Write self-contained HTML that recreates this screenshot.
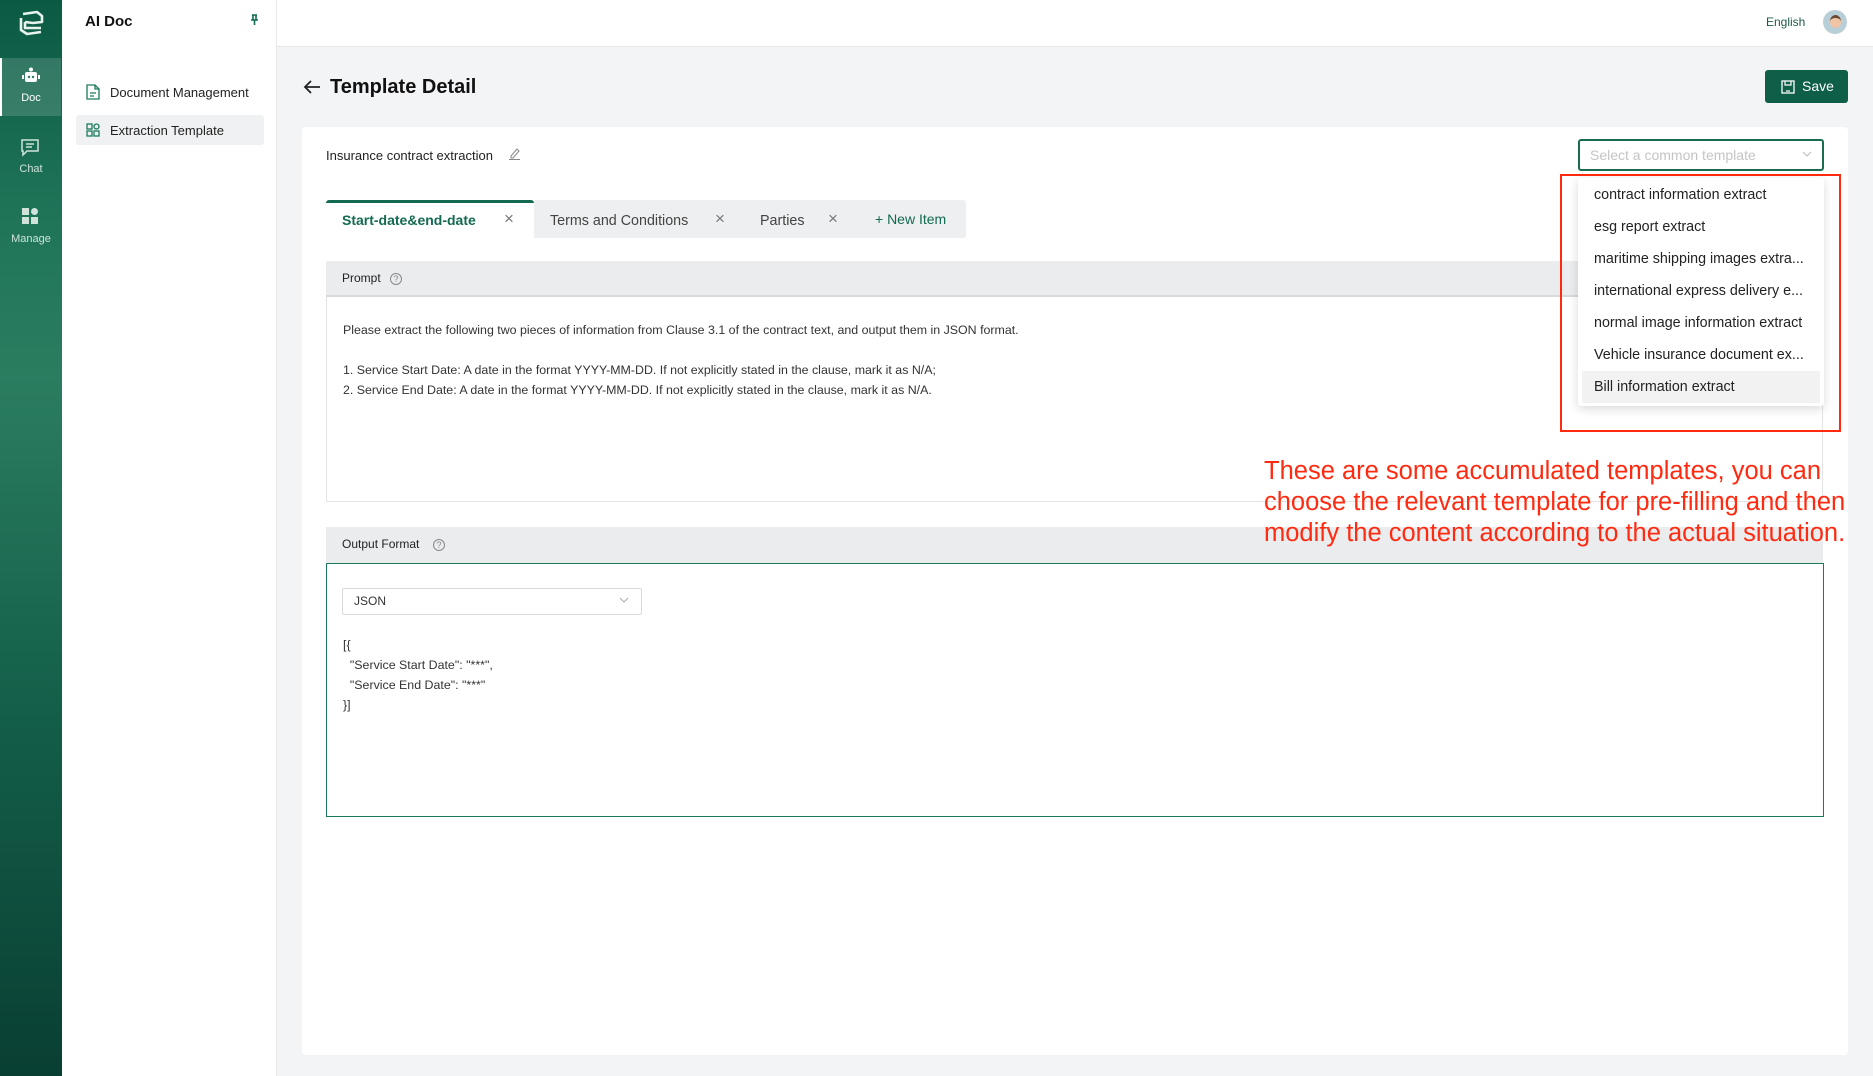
<!DOCTYPE html>
<html><head><meta charset="utf-8"><style>
*{box-sizing:border-box;margin:0;padding:0}
body{width:1873px;height:1076px;overflow:hidden;background:#f3f4f6;font-family:"Liberation Sans",Arial,sans-serif;color:#222;position:relative}
.abs{position:absolute}
.rail{left:0;top:0;width:62px;height:1076px;background:linear-gradient(180deg,#0b5a44 0%,#1f7458 20%,#2b7d60 35%,#14604a 65%,#093f33 100%)}
.rail .it{position:absolute;left:0;width:62px;text-align:center;color:#cfe3db;font-size:11px}
.side{left:62px;top:0;width:215px;height:1076px;background:#fff;border-right:1px solid #e8e8e8}
.top{left:277px;top:0;width:1596px;height:47px;background:#fff;border-bottom:1px solid #e6e6e6}
.card{left:302px;top:127px;width:1546px;height:928px;background:#fff;border-radius:4px}
.t{position:absolute;white-space:nowrap}
</style></head><body>
<div class="abs rail">
 <svg class="abs" style="left:17px;top:10px" width="28" height="26" viewBox="0 0 28 26"><path d="M6 4 L20 2 L25 6 L25 12 L16 13 L8 12 M8 12 L8 18 L24 18 M4 8 L4 20 L10 24 L24 22" fill="none" stroke="#e8f2ee" stroke-width="2.6" stroke-linejoin="round"/></svg>
 <div class="abs" style="left:0;top:58px;width:61px;height:58px;background:rgba(255,255,255,.15);border-left:2px solid #fff"></div>
 <svg class="abs" style="left:21px;top:67px" width="20" height="18" viewBox="0 0 20 18"><circle cx="10" cy="2.5" r="2" fill="#fff"/><rect x="4" y="5" width="12" height="10" rx="2" fill="#fff"/><rect x="1" y="8" width="2" height="4" fill="#fff"/><rect x="17" y="8" width="2" height="4" fill="#fff"/><circle cx="8" cy="10" r="1.2" fill="#2b7d60"/><circle cx="12" cy="10" r="1.2" fill="#2b7d60"/></svg>
 <div class="it" style="top:92px;color:#fff">Doc</div>
 <svg class="abs" style="left:20px;top:138px" width="20" height="19" viewBox="0 0 20 19"><path d="M2 2 H18 V13 H7 L3 17 V13 H2 Z" fill="none" stroke="#cfe3db" stroke-width="1.5"/><path d="M6 6 H14 M6 9 H12" stroke="#cfe3db" stroke-width="1.4"/></svg>
 <div class="it" style="top:163px">Chat</div>
 <svg class="abs" style="left:21px;top:207px" width="18" height="18" viewBox="0 0 18 18"><rect x="1" y="1" width="7" height="7" fill="#cfe3db"/><circle cx="13.5" cy="4.5" r="3.5" fill="#cfe3db"/><rect x="1" y="10" width="7" height="7" fill="#cfe3db"/><rect x="10" y="10" width="7" height="7" fill="#cfe3db"/></svg>
 <div class="it" style="top:233px">Manage</div>
</div>
<div class="abs side">
 <div class="t" style="left:23px;top:13px;font-size:15px;font-weight:bold;color:#111">AI Doc</div>
 <svg class="abs" style="left:188px;top:14px" width="9" height="12" viewBox="0 0 9 12"><path d="M2 1 H7 M3 1 V6 M6 1 V6 M1 6 H8 M4.5 6 V11" stroke="#0f6b50" stroke-width="1.6" fill="none"/></svg>
 <svg class="abs" style="left:24px;top:84px" width="14" height="16" viewBox="0 0 14 16"><path d="M1 1 H9 L13 5 V15 H1 Z M9 1 V5 H13 M4 9 H10 M4 12 H8" fill="none" stroke="#1a7a5c" stroke-width="1.3"/></svg>
 <div class="t" style="left:48px;top:85px;font-size:13px;color:#222">Document Management</div>
 <div class="abs" style="left:14px;top:115px;width:188px;height:30px;background:#f0f1f2;border-radius:3px"></div>
 <svg class="abs" style="left:24px;top:123px" width="14" height="14" viewBox="0 0 14 14"><rect x="1" y="1" width="5" height="5" fill="none" stroke="#1a7a5c" stroke-width="1.3"/><circle cx="10.5" cy="3.5" r="2.5" fill="none" stroke="#1a7a5c" stroke-width="1.3"/><rect x="1" y="8" width="5" height="5" fill="none" stroke="#1a7a5c" stroke-width="1.3"/><rect x="8" y="8" width="5" height="5" fill="none" stroke="#1a7a5c" stroke-width="1.3"/></svg>
 <div class="t" style="left:48px;top:123px;font-size:13px;color:#222">Extraction Template</div>
</div>
<div class="abs top">
 <div class="t" style="left:1489px;top:15px;font-size:12px;color:#1d5a47">English</div>
 <div class="abs" style="left:1546px;top:10px;width:24px;height:24px;border-radius:50%;background:#b9cfd8;overflow:hidden"><div style="margin:5px auto 0;width:11px;height:13px;border-radius:50%;background:#f0c4a4;border-top:3px solid #6b4a35"></div></div>
</div>
<svg class="abs" style="left:302px;top:79px" width="20" height="16" viewBox="0 0 20 16"><path d="M18 8 H3 M9 2 L3 8 L9 14" fill="none" stroke="#222" stroke-width="1.8"/></svg>
<div class="t" style="left:330px;top:76px;font-size:20px;font-weight:bold;color:#111">Template Detail</div>
<div class="abs" style="left:1765px;top:70px;width:83px;height:33px;background:#0f5e48;border-radius:3px"></div>
<svg class="abs" style="left:1781px;top:80px" width="14" height="14" viewBox="0 0 14 14"><rect x="1" y="1" width="12" height="12" fill="none" stroke="#fff" stroke-width="1.3"/><path d="M4 1 V5 H10 V1 M5 11 H9" stroke="#fff" stroke-width="1.2" fill="none"/></svg>
<div class="t" style="left:1802px;top:78px;font-size:14px;color:#fff">Save</div>

<div class="abs card"></div>
<div class="t" style="left:326px;top:148px;font-size:13px;color:#222">Insurance contract extraction</div>
<svg class="abs" style="left:508px;top:147px" width="13" height="13" viewBox="0 0 13 13"><path d="M3 9 L9 2 L11 4 L5 11 L3 11 Z M1 12.5 H12" fill="none" stroke="#888" stroke-width="1"/></svg>

<div class="abs" style="left:534px;top:200px;width:432px;height:38px;background:#eeeff1;border-radius:0 3px 3px 0"></div>
<div class="abs" style="left:326px;top:200px;width:208px;height:38px;background:#fff;border-top:3px solid #136a51;border-radius:3px 3px 0 0"></div>
<div class="t" style="left:342px;top:212px;font-size:14px;color:#136a51;font-weight:bold">Start-date&amp;end-date</div>
<div class="t" style="left:504px;top:209px;font-size:17px;color:#777">×</div>
<div class="t" style="left:550px;top:213px;font-size:14.3px;color:#444">Terms and Conditions</div>
<div class="t" style="left:715px;top:209px;font-size:17px;color:#777">×</div>
<div class="t" style="left:760px;top:213px;font-size:14.3px;color:#444">Parties</div>
<div class="t" style="left:828px;top:209px;font-size:17px;color:#777">×</div>
<div class="t" style="left:875px;top:211px;font-size:14px;color:#136a51">+ New Item</div>

<div class="abs" style="left:326px;top:261px;width:1497px;height:36px;background:#ebecee;border-bottom:2px solid #d9d9d9"></div>
<div class="t" style="left:342px;top:271px;font-size:12px;color:#222">Prompt</div>
<div class="abs" style="left:390px;top:273px;width:12px;height:12px;border:1px solid #888;border-radius:50%;font-size:9px;line-height:10px;text-align:center;color:#888">?</div>
<div class="abs" style="left:326px;top:297px;width:1497px;height:205px;border:1px solid #e3e3e3;border-top:none"></div>
<div class="t" style="left:343px;top:320px;font-size:12.4px;color:#333;line-height:20px">Please extract the following two pieces of information from Clause 3.1 of the contract text, and output them in JSON format.<br><br>1. Service Start Date: A date in the format YYYY-MM-DD. If not explicitly stated in the clause, mark it as N/A;<br>2. Service End Date: A date in the format YYYY-MM-DD. If not explicitly stated in the clause, mark it as N/A.</div>

<div class="abs" style="left:326px;top:527px;width:1497px;height:36px;background:#ebecee"></div>
<div class="t" style="left:342px;top:537px;font-size:12px;color:#222">Output Format</div>
<div class="abs" style="left:433px;top:539px;width:12px;height:12px;border:1px solid #888;border-radius:50%;font-size:9px;line-height:10px;text-align:center;color:#888">?</div>
<div class="abs" style="left:326px;top:563px;width:1498px;height:254px;border:1px solid #1a7a5c"></div>
<div class="abs" style="left:342px;top:588px;width:300px;height:27px;border:1px solid #d9d9d9;border-radius:2px"></div>
<div class="t" style="left:354px;top:594px;font-size:12px;color:#333">JSON</div>
<svg class="abs" style="left:619px;top:597px" width="10" height="7" viewBox="0 0 10 7"><path d="M1 1 L5 5 L9 1" fill="none" stroke="#aaa" stroke-width="1"/></svg>
<div class="t" style="left:343px;top:635px;font-size:12.4px;color:#333;line-height:20px;white-space:pre">[{
  "Service Start Date": "***",
  "Service End Date": "***"
}]</div>

<div class="abs" style="left:1578px;top:139px;width:246px;height:32px;border:2px solid #1a6b52;border-radius:3px;background:#fff"></div>
<div class="t" style="left:1590px;top:147px;font-size:14px;color:#c4c4c4">Select a common template</div>
<svg class="abs" style="left:1802px;top:151px" width="10" height="7" viewBox="0 0 10 7"><path d="M1 1 L5 5 L9 1" fill="none" stroke="#bbb" stroke-width="1"/></svg>
<div class="abs" style="left:1578px;top:178px;width:246px;height:228px;background:#fff;box-shadow:0 3px 10px rgba(0,0,0,.15);border-radius:3px"></div>
<div class="abs" style="left:1582px;top:371px;width:238px;height:32px;background:#f2f2f2;border-radius:2px"></div>
<div class="t" style="left:1594px;top:179px;font-size:14.3px;color:#222;line-height:32px">contract information extract<br>esg report extract<br>maritime shipping images extra...<br>international express delivery e...<br>normal image information extract<br>Vehicle insurance document ex...<br>Bill information extract</div>
<div class="abs" style="left:1560px;top:174px;width:281px;height:258px;border:2px solid #ff2a10"></div>
<div class="t" style="left:1264px;top:456px;font-size:25.5px;color:#ff2a10;line-height:31px">These are some accumulated templates, you can<br>choose the relevant template for pre-filling and then<br>modify the content according to the actual situation.</div>
</body></html>
